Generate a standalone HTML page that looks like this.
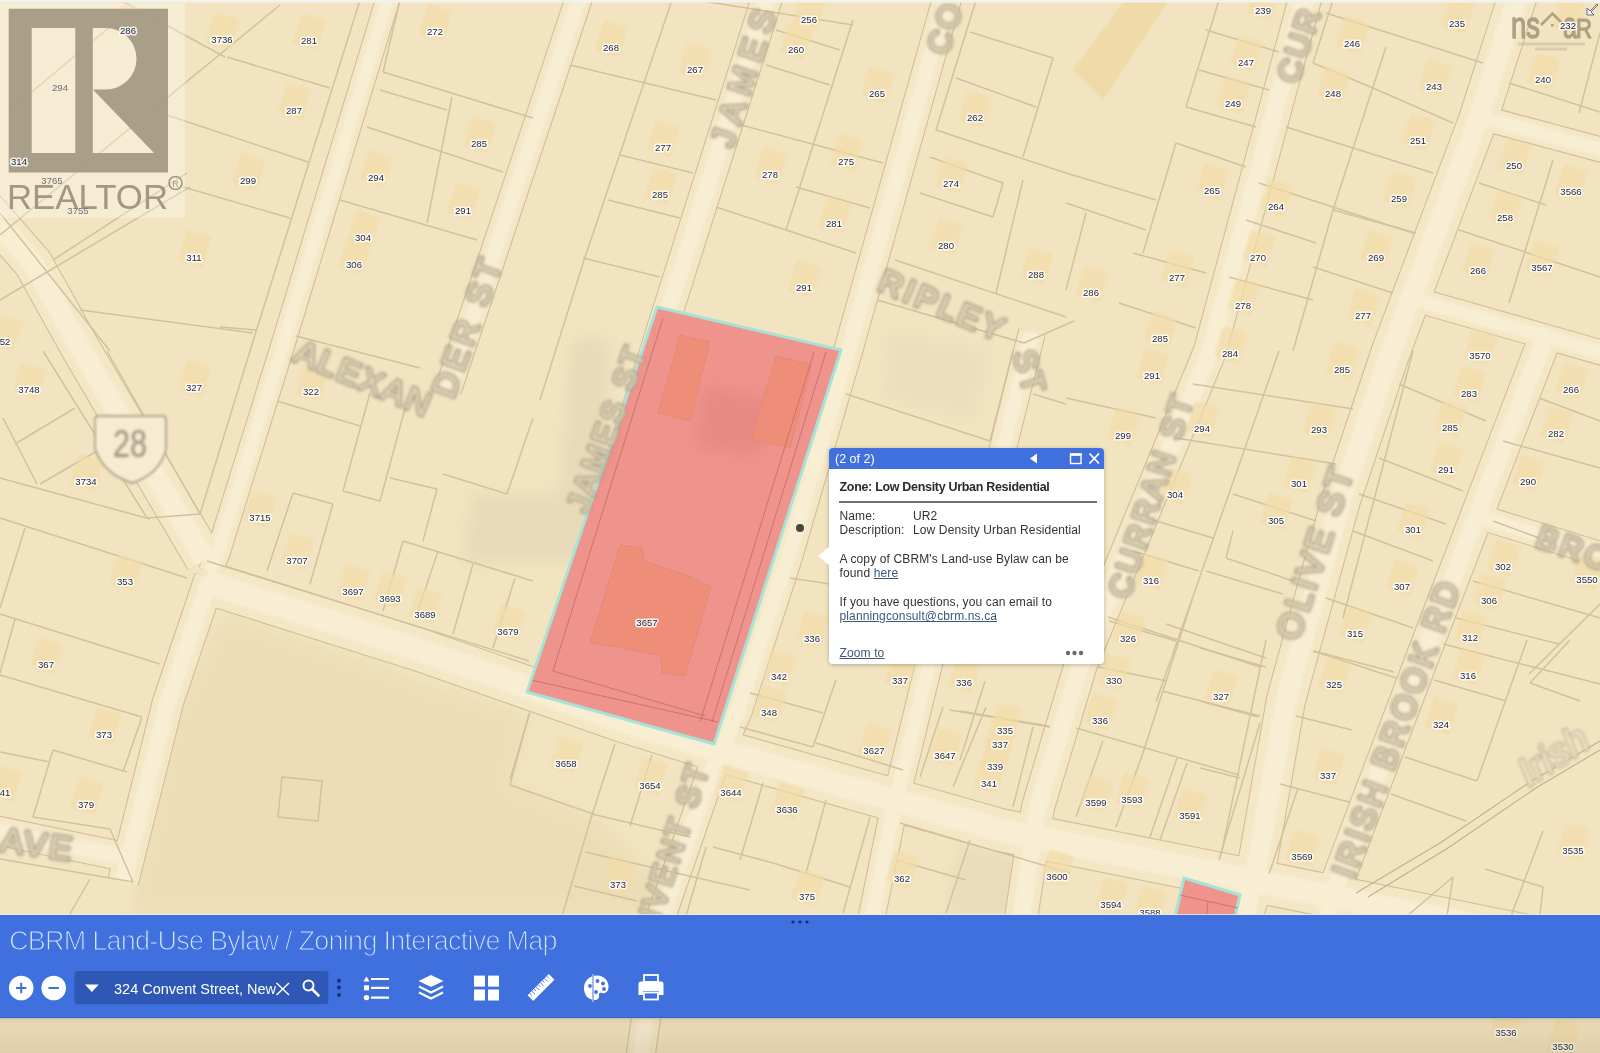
<!DOCTYPE html>
<html><head><meta charset="utf-8"><style>
html,body{margin:0;padding:0;width:1600px;height:1053px;overflow:hidden;background:#F2E4C1;font-family:"Liberation Sans",sans-serif;}
#map{position:absolute;left:0;top:0;width:1600px;height:1053px;}
#map svg{display:block;}
#popup{position:absolute;left:829px;top:448px;width:275px;height:216px;background:#fff;border-radius:4px;box-shadow:0 1px 4px rgba(0,0,0,0.25);color:#333;font-size:12px;}
#popup .ph{position:absolute;left:0;top:0;width:275px;height:21px;background:#3F70DE;border-radius:4px 4px 0 0;}
#popup .pt{position:absolute;left:6px;top:3.6px;color:#fff;font-size:12.5px;line-height:15px;white-space:nowrap;}
#popup .pz{position:absolute;left:10.5px;top:32.3px;font-size:12.5px;font-weight:bold;letter-spacing:-0.31px;line-height:15px;white-space:nowrap;color:#2b2b2b;}
#popup .psep{position:absolute;left:10px;top:53px;width:258px;height:2px;background:#707070;}
#popup .pl{position:absolute;left:10.5px;font-size:12px;letter-spacing:0.13px;line-height:15px;white-space:nowrap;color:#333;}
#popup u.lk{color:#3A5878;text-decoration:underline;}
#bar{position:absolute;left:0;top:915px;width:1600px;height:101.5px;background:#3F70DE;border-bottom:1px solid #3563C8;}
#bar > *{margin-top:1px;}
#topline{position:absolute;left:0;top:913.5px;width:1600px;height:1.5px;background:rgba(235,238,240,0.75);}
#below{position:absolute;left:0;top:1017.5px;width:1600px;height:36px;background:linear-gradient(to bottom, rgba(150,150,150,0.55) 0px, rgba(140,110,60,0.16) 2px, rgba(120,95,50,0.08) 8px, rgba(120,95,50,0.11) 20px, rgba(120,95,50,0.16) 36px);}
#bar .title{position:absolute;left:8px;top:8px;font-size:29px;line-height:34px;color:#D8E6FF;white-space:nowrap;letter-spacing:-0.5px;}
#bar .stext{position:absolute;left:114px;top:63.7px;font-size:14.5px;line-height:18px;color:#fff;white-space:nowrap;}
#bar .bdots{position:absolute;left:791px;top:4px;width:20px;height:4px;}
#bar .bdots i{display:inline-block;width:3px;height:3px;border-radius:50%;background:#1B2E6A;margin-right:3px;}

</style></head><body>
<div id="map"><svg width="1600" height="1053" viewBox="0 0 1600 1053"><defs><filter id="bl1" x="-5%" y="-5%" width="110%" height="110%"><feGaussianBlur stdDeviation="1.2"/></filter><filter id="bl05" x="-5%" y="-5%" width="110%" height="110%"><feGaussianBlur stdDeviation="0.45"/></filter><filter id="bl07" x="-5%" y="-5%" width="110%" height="110%"><feGaussianBlur stdDeviation="0.7"/></filter><filter id="bl15" x="-5%" y="-5%" width="110%" height="110%"><feGaussianBlur stdDeviation="1.6"/></filter><filter id="bl2" x="-20%" y="-20%" width="140%" height="140%"><feGaussianBlur stdDeviation="1.35"/></filter><filter id="bl3" x="-20%" y="-20%" width="140%" height="140%"><feGaussianBlur stdDeviation="8"/></filter></defs><rect width="1600" height="1053" fill="#F2E4C1"/><g filter="url(#bl3)"><polygon points="225,614 529,716 510,785 600,820 690,916 130,916 168,720" fill="#E8D8AC" fill-opacity="0.5"/><polygon points="571,339 610,339 598,558 465,565 470,494 560,494" fill="#DCCFAD" fill-opacity="0.45"/><polygon points="890,330 990,350 975,420 880,400" fill="#DDD0AE" fill-opacity="0.25"/><polygon points="960,845 1030,860 1015,916 945,916" fill="#DDD0AE" fill-opacity="0.4"/></g><polygon points="1073,70 1103,100 1170,-2 1126,-2" fill="#EDD7A2" fill-opacity="0.8" filter="url(#bl1)"/><g filter="url(#bl07)"><polyline points="389,-5 281,351 218,553 210,572" fill="none" stroke="#D0BF98" stroke-width="25.2" stroke-linejoin="round"/><polyline points="210,578 168,702 123,882" fill="none" stroke="#D0BF98" stroke-width="32.2" stroke-linejoin="round"/><polyline points="-10,829 125,857" fill="none" stroke="#D0BF98" stroke-width="30.2" stroke-linejoin="round"/><polyline points="-40,180 33,263 82,351 205,560" fill="none" stroke="#D0BF98" stroke-width="40.2" stroke-linejoin="round"/><polyline points="205,582 420,650 620,720 700,745 1000,830 1300,890 1620,955" fill="none" stroke="#D0BF98" stroke-width="44.2" stroke-linejoin="round"/><polyline points="580,-5 448,390" fill="none" stroke="#D0BF98" stroke-width="28.2" stroke-linejoin="round"/><polyline points="768,-5 665,320 549,692" fill="none" stroke="#D0BF98" stroke-width="32.2" stroke-linejoin="round"/><polyline points="948,-5 848,351 787,560 738,710 712,770 660,920 640,1060" fill="none" stroke="#D0BF98" stroke-width="30.2" stroke-linejoin="round"/><polyline points="1032,332 1003,448 930,660 895,803 870,925" fill="none" stroke="#D0BF98" stroke-width="28.2" stroke-linejoin="round"/><polyline points="1306,-5 1210,351 1081,664 1038,807 1020,925" fill="none" stroke="#D0BF98" stroke-width="34.2" stroke-linejoin="round"/><polyline points="1518,-5 1478,120 1391,351 1341,500 1286,700 1256,871 1240,930" fill="none" stroke="#D0BF98" stroke-width="40.2" stroke-linejoin="round"/><polyline points="1483,118 1610,152" fill="none" stroke="#D0BF98" stroke-width="26.2" stroke-linejoin="round"/><polyline points="1417,300 1610,355" fill="none" stroke="#D0BF98" stroke-width="26.2" stroke-linejoin="round"/><polyline points="1480,517 1610,557" fill="none" stroke="#D0BF98" stroke-width="26.2" stroke-linejoin="round"/><polyline points="1548,330 1540,351 1429,640 1333,893 1325,930" fill="none" stroke="#D0BF98" stroke-width="34.2" stroke-linejoin="round"/><polyline points="389,-5 281,351 218,553 210,572" fill="none" stroke="#F3E7C6" stroke-width="23" stroke-linejoin="round"/><polyline points="210,578 168,702 123,882" fill="none" stroke="#F3E7C6" stroke-width="30" stroke-linejoin="round"/><polyline points="-10,829 125,857" fill="none" stroke="#F3E7C6" stroke-width="28" stroke-linejoin="round"/><polyline points="-40,180 33,263 82,351 205,560" fill="none" stroke="#F3E7C6" stroke-width="38" stroke-linejoin="round"/><polyline points="205,582 420,650 620,720 700,745 1000,830 1300,890 1620,955" fill="none" stroke="#F3E7C6" stroke-width="42" stroke-linejoin="round"/><polyline points="580,-5 448,390" fill="none" stroke="#F3E7C6" stroke-width="26" stroke-linejoin="round"/><polyline points="768,-5 665,320 549,692" fill="none" stroke="#F3E7C6" stroke-width="30" stroke-linejoin="round"/><polyline points="948,-5 848,351 787,560 738,710 712,770 660,920 640,1060" fill="none" stroke="#F3E7C6" stroke-width="28" stroke-linejoin="round"/><polyline points="1032,332 1003,448 930,660 895,803 870,925" fill="none" stroke="#F3E7C6" stroke-width="26" stroke-linejoin="round"/><polyline points="1306,-5 1210,351 1081,664 1038,807 1020,925" fill="none" stroke="#F3E7C6" stroke-width="32" stroke-linejoin="round"/><polyline points="1518,-5 1478,120 1391,351 1341,500 1286,700 1256,871 1240,930" fill="none" stroke="#F3E7C6" stroke-width="38" stroke-linejoin="round"/><polyline points="1483,118 1610,152" fill="none" stroke="#F3E7C6" stroke-width="24" stroke-linejoin="round"/><polyline points="1417,300 1610,355" fill="none" stroke="#F3E7C6" stroke-width="24" stroke-linejoin="round"/><polyline points="1480,517 1610,557" fill="none" stroke="#F3E7C6" stroke-width="24" stroke-linejoin="round"/><polyline points="1548,330 1540,351 1429,640 1333,893 1325,930" fill="none" stroke="#F3E7C6" stroke-width="32" stroke-linejoin="round"/></g><g filter="url(#bl15)"><polyline points="389,-5 281,351 218,553 210,572" fill="none" stroke="#F8EED3" stroke-width="12.7" stroke-linejoin="round"/><polyline points="210,578 168,702 123,882" fill="none" stroke="#F8EED3" stroke-width="16.5" stroke-linejoin="round"/><polyline points="-10,829 125,857" fill="none" stroke="#F8EED3" stroke-width="15.4" stroke-linejoin="round"/><polyline points="-40,180 33,263 82,351 205,560" fill="none" stroke="#F8EED3" stroke-width="20.9" stroke-linejoin="round"/><polyline points="205,582 420,650 620,720 700,745 1000,830 1300,890 1620,955" fill="none" stroke="#F8EED3" stroke-width="23.1" stroke-linejoin="round"/><polyline points="580,-5 448,390" fill="none" stroke="#F8EED3" stroke-width="14.3" stroke-linejoin="round"/><polyline points="768,-5 665,320 549,692" fill="none" stroke="#F8EED3" stroke-width="16.5" stroke-linejoin="round"/><polyline points="948,-5 848,351 787,560 738,710 712,770 660,920 640,1060" fill="none" stroke="#F8EED3" stroke-width="15.4" stroke-linejoin="round"/><polyline points="1032,332 1003,448 930,660 895,803 870,925" fill="none" stroke="#F8EED3" stroke-width="14.3" stroke-linejoin="round"/><polyline points="1306,-5 1210,351 1081,664 1038,807 1020,925" fill="none" stroke="#F8EED3" stroke-width="17.6" stroke-linejoin="round"/><polyline points="1518,-5 1478,120 1391,351 1341,500 1286,700 1256,871 1240,930" fill="none" stroke="#F8EED3" stroke-width="20.9" stroke-linejoin="round"/><polyline points="1483,118 1610,152" fill="none" stroke="#F8EED3" stroke-width="13.2" stroke-linejoin="round"/><polyline points="1417,300 1610,355" fill="none" stroke="#F8EED3" stroke-width="13.2" stroke-linejoin="round"/><polyline points="1480,517 1610,557" fill="none" stroke="#F8EED3" stroke-width="13.2" stroke-linejoin="round"/><polyline points="1548,330 1540,351 1429,640 1333,893 1325,930" fill="none" stroke="#F8EED3" stroke-width="17.6" stroke-linejoin="round"/></g><g stroke="#D2C29C" stroke-width="1.5" fill="none" filter="url(#bl07)"><line x1="167" y1="115" x2="308" y2="162"/><line x1="183" y1="187" x2="290" y2="218"/><line x1="227" y1="57" x2="330" y2="88"/><line x1="280" y1="5" x2="0" y2="235"/><line x1="53" y1="260" x2="187" y2="173"/><line x1="80" y1="310" x2="253" y2="333"/><line x1="10" y1="110" x2="130" y2="10"/><line x1="383" y1="72" x2="533" y2="118"/><line x1="367" y1="127" x2="503" y2="172"/><line x1="452" y1="97" x2="427" y2="223"/><line x1="340" y1="200" x2="477" y2="240"/><line x1="380" y1="90" x2="447" y2="110"/><line x1="400" y1="0" x2="383" y2="72"/><line x1="360" y1="0" x2="250" y2="351"/><line x1="220" y1="327" x2="256" y2="330"/><line x1="296" y1="336" x2="420" y2="368"/><line x1="0" y1="213" x2="110" y2="351"/><line x1="190" y1="187" x2="0" y2="300"/><line x1="225" y1="57" x2="120" y2="0"/><line x1="570" y1="65" x2="716" y2="100"/><line x1="671" y1="3" x2="585" y2="257"/><line x1="620" y1="155" x2="693" y2="173"/><line x1="608" y1="200" x2="680" y2="218"/><line x1="583" y1="258" x2="660" y2="277"/><line x1="776" y1="30" x2="840" y2="50"/><line x1="766" y1="65" x2="830" y2="85"/><line x1="741" y1="125" x2="883" y2="163"/><line x1="716" y1="207" x2="856" y2="253"/><line x1="853" y1="20" x2="786" y2="230"/><line x1="796" y1="187" x2="870" y2="208"/><line x1="970" y1="32" x2="1053" y2="58"/><line x1="956" y1="78" x2="1036" y2="107"/><line x1="936" y1="130" x2="1066" y2="173"/><line x1="920" y1="193" x2="993" y2="217"/><line x1="1003" y1="183" x2="993" y2="217"/><line x1="930" y1="157" x2="1003" y2="183"/><line x1="895" y1="260" x2="1066" y2="317"/><line x1="976" y1="0" x2="936" y2="130"/><line x1="1053" y1="58" x2="1023" y2="157"/><line x1="1023" y1="180" x2="996" y2="293"/><line x1="1024" y1="343" x2="1074" y2="321"/><line x1="877" y1="300" x2="1024" y2="343"/><line x1="585" y1="257" x2="540" y2="400"/><line x1="696" y1="0" x2="853" y2="25"/><line x1="1219" y1="0" x2="1186" y2="107"/><line x1="1186" y1="107" x2="1256" y2="127"/><line x1="1206" y1="30" x2="1279" y2="52"/><line x1="1199" y1="70" x2="1269" y2="90"/><line x1="1176" y1="143" x2="1246" y2="167"/><line x1="1176" y1="143" x2="1143" y2="253"/><line x1="1066" y1="173" x2="1156" y2="200"/><line x1="1066" y1="203" x2="1146" y2="230"/><line x1="1133" y1="253" x2="1206" y2="273"/><line x1="1119" y1="303" x2="1196" y2="328"/><line x1="1086" y1="213" x2="1066" y2="290"/><line x1="1333" y1="0" x2="1313" y2="63"/><line x1="1313" y1="63" x2="1373" y2="88"/><line x1="1326" y1="13" x2="1483" y2="63"/><line x1="1286" y1="127" x2="1433" y2="173"/><line x1="1373" y1="88" x2="1453" y2="123"/><line x1="1259" y1="183" x2="1413" y2="233"/><line x1="1246" y1="220" x2="1316" y2="243"/><line x1="1333" y1="210" x2="1416" y2="233"/><line x1="1386" y1="47" x2="1333" y2="210"/><line x1="1333" y1="210" x2="1293" y2="351"/><line x1="1313" y1="267" x2="1393" y2="293"/><line x1="1229" y1="277" x2="1313" y2="300"/><line x1="1509" y1="83" x2="1600" y2="112"/><line x1="1479" y1="183" x2="1546" y2="205"/><line x1="1459" y1="230" x2="1600" y2="277"/><line x1="1553" y1="160" x2="1509" y2="303"/><line x1="1600" y1="33" x2="1579" y2="113"/><line x1="15" y1="444" x2="75" y2="408"/><line x1="0" y1="478" x2="150" y2="519"/><line x1="40" y1="484" x2="97" y2="451"/><line x1="0" y1="518" x2="187" y2="578"/><line x1="25" y1="528" x2="0" y2="608"/><line x1="0" y1="614" x2="160" y2="664"/><line x1="3" y1="418" x2="37" y2="484"/><line x1="43" y1="351" x2="147" y2="518"/><line x1="107" y1="351" x2="200" y2="514"/><line x1="147" y1="518" x2="200" y2="514"/><line x1="200" y1="514" x2="250" y2="351"/><line x1="277" y1="401" x2="360" y2="426"/><line x1="370" y1="393" x2="343" y2="491"/><line x1="343" y1="491" x2="380" y2="501"/><line x1="407" y1="401" x2="380" y2="501"/><line x1="390" y1="478" x2="437" y2="489"/><line x1="437" y1="489" x2="423" y2="541"/><line x1="443" y1="474" x2="507" y2="494"/><line x1="533" y1="418" x2="507" y2="494"/><line x1="293" y1="493" x2="333" y2="504"/><line x1="293" y1="493" x2="267" y2="571"/><line x1="333" y1="504" x2="310" y2="584"/><line x1="403" y1="541" x2="533" y2="581"/><line x1="403" y1="541" x2="383" y2="611"/><line x1="438" y1="551" x2="417" y2="614"/><line x1="473" y1="564" x2="453" y2="634"/><line x1="515" y1="578" x2="493" y2="648"/><line x1="207" y1="561" x2="529" y2="661"/><line x1="846" y1="394" x2="990" y2="441"/><line x1="990" y1="441" x2="1013" y2="351"/><line x1="790" y1="578" x2="830" y2="584"/><line x1="1033" y1="394" x2="1066" y2="404"/><line x1="1066" y1="398" x2="1156" y2="418"/><line x1="1146" y1="518" x2="1213" y2="538"/><line x1="1133" y1="551" x2="1199" y2="571"/><line x1="1109" y1="621" x2="1176" y2="641"/><line x1="1279" y1="351" x2="1156" y2="702"/><line x1="1193" y1="384" x2="1353" y2="409"/><line x1="1176" y1="438" x2="1336" y2="464"/><line x1="1233" y1="494" x2="1316" y2="521"/><line x1="1233" y1="531" x2="1226" y2="558"/><line x1="1226" y1="558" x2="1293" y2="581"/><line x1="1206" y1="571" x2="1283" y2="594"/><line x1="1166" y1="624" x2="1266" y2="658"/><line x1="1413" y1="351" x2="1343" y2="618"/><line x1="1399" y1="384" x2="1486" y2="421"/><line x1="1379" y1="458" x2="1463" y2="491"/><line x1="1359" y1="494" x2="1446" y2="524"/><line x1="1353" y1="531" x2="1433" y2="561"/><line x1="1326" y1="598" x2="1413" y2="628"/><line x1="1313" y1="651" x2="1396" y2="678"/><line x1="1539" y1="398" x2="1600" y2="421"/><line x1="1503" y1="441" x2="1600" y2="468"/><line x1="1493" y1="521" x2="1539" y2="538"/><line x1="1473" y1="581" x2="1600" y2="618"/><line x1="1456" y1="618" x2="1559" y2="644"/><line x1="1529" y1="674" x2="1600" y2="604"/><line x1="1443" y1="644" x2="1600" y2="684"/><line x1="0" y1="752" x2="50" y2="762"/><line x1="53" y1="750" x2="127" y2="772"/><line x1="53" y1="750" x2="33" y2="817"/><line x1="33" y1="817" x2="110" y2="829"/><line x1="110" y1="829" x2="133" y2="882"/><line x1="0" y1="859" x2="133" y2="882"/><line x1="0" y1="675" x2="142" y2="717"/><line x1="142" y1="717" x2="123" y2="772"/><line x1="15" y1="619" x2="0" y2="673"/><line x1="90" y1="879" x2="67" y2="919"/><line x1="530" y1="712" x2="510" y2="779"/><line x1="1108" y1="617" x2="1260" y2="667"/><line x1="1192" y1="600" x2="1143" y2="753"/><line x1="1143" y1="753" x2="1116" y2="827"/><line x1="1098" y1="667" x2="1167" y2="681"/><line x1="1162" y1="691" x2="1260" y2="716"/><line x1="1076" y1="728" x2="1239" y2="775"/><line x1="1103" y1="741" x2="1076" y2="817"/><line x1="1177" y1="758" x2="1150" y2="837"/><line x1="1187" y1="763" x2="1160" y2="840"/><line x1="1260" y1="723" x2="1219" y2="860"/><line x1="960" y1="711" x2="1049" y2="726"/><line x1="985" y1="681" x2="960" y2="760"/><line x1="1200" y1="648" x2="1266" y2="667"/><line x1="1266" y1="640" x2="1221" y2="855"/><line x1="1314" y1="651" x2="1394" y2="672"/><line x1="1296" y1="716" x2="1352" y2="730"/><line x1="1280" y1="784" x2="1349" y2="802"/><line x1="1298" y1="788" x2="1269" y2="874"/><line x1="1200" y1="701" x2="1258" y2="717"/><line x1="1200" y1="768" x2="1240" y2="778"/><line x1="1434" y1="680" x2="1506" y2="701"/><line x1="1527" y1="640" x2="1477" y2="781"/><line x1="1405" y1="757" x2="1477" y2="781"/><line x1="1391" y1="794" x2="1466" y2="821"/><line x1="1530" y1="683" x2="1580" y2="701"/><line x1="1570" y1="640" x2="1530" y2="683"/><line x1="1543" y1="831" x2="1511" y2="916"/><line x1="1485" y1="869" x2="1543" y2="887"/><line x1="1543" y1="887" x2="1540" y2="916"/><line x1="1453" y1="877" x2="1407" y2="916"/><line x1="1453" y1="877" x2="1447" y2="916"/><line x1="529" y1="714" x2="510" y2="785"/><line x1="510" y1="785" x2="596" y2="815"/><line x1="615" y1="744" x2="592" y2="815"/><line x1="592" y1="815" x2="562" y2="916"/><line x1="652" y1="755" x2="630" y2="826"/><line x1="596" y1="815" x2="690" y2="837"/><line x1="585" y1="852" x2="750" y2="890"/><line x1="574" y1="886" x2="637" y2="901"/><line x1="706" y1="847" x2="686" y2="916"/><line x1="763" y1="783" x2="740" y2="860"/><line x1="713" y1="847" x2="773" y2="863"/><line x1="773" y1="863" x2="850" y2="887"/><line x1="826" y1="800" x2="806" y2="873"/><line x1="870" y1="817" x2="843" y2="913"/><line x1="900" y1="823" x2="1070" y2="873"/><line x1="970" y1="840" x2="946" y2="913"/><line x1="896" y1="860" x2="966" y2="880"/><line x1="750" y1="693" x2="823" y2="713"/><line x1="740" y1="727" x2="813" y2="747"/><line x1="813" y1="747" x2="836" y2="680"/><line x1="816" y1="743" x2="903" y2="770"/><line x1="950" y1="710" x2="1050" y2="727"/><line x1="943" y1="707" x2="920" y2="777"/><line x1="986" y1="707" x2="953" y2="787"/><line x1="1033" y1="727" x2="1013" y2="807"/><polygon points="282,777 322,781 318,821 278,817"/></g><g fill="none" stroke="#C2B08A" stroke-width="1.1" filter="url(#bl05)"><polyline points="1356,893 1440,843 1530,782 1600,741"/><polyline points="1368,897 1448,848 1536,788 1600,750"/></g><g fill="#F2DCA6" fill-opacity="0.7" filter="url(#bl1)"><rect x="-12" y="-16" width="25" height="31" transform="translate(128,22) rotate(17)"/><rect x="-12" y="-16" width="25" height="31" transform="translate(222,31) rotate(17)"/><rect x="-12" y="-16" width="25" height="31" transform="translate(309,32) rotate(17)"/><rect x="-12" y="-16" width="25" height="31" transform="translate(435,23) rotate(17)"/><rect x="-12" y="-16" width="25" height="31" transform="translate(611,39) rotate(17)"/><rect x="-12" y="-16" width="25" height="31" transform="translate(809,11) rotate(17)"/><rect x="-12" y="-16" width="25" height="31" transform="translate(796,41) rotate(17)"/><rect x="-12" y="-16" width="25" height="31" transform="translate(695,61) rotate(17)"/><rect x="-12" y="-16" width="25" height="31" transform="translate(1263,2) rotate(17)"/><rect x="-12" y="-16" width="25" height="31" transform="translate(1457,15) rotate(17)"/><rect x="-12" y="-16" width="25" height="31" transform="translate(1568,17) rotate(17)"/><rect x="-12" y="-16" width="25" height="31" transform="translate(1352,35) rotate(17)"/><rect x="-12" y="-16" width="25" height="31" transform="translate(1246,54) rotate(17)"/><rect x="-12" y="-16" width="25" height="31" transform="translate(1543,71) rotate(17)"/><rect x="-12" y="-16" width="25" height="31" transform="translate(1434,78) rotate(17)"/><rect x="-12" y="-16" width="25" height="31" transform="translate(1333,85) rotate(17)"/><rect x="-12" y="-16" width="25" height="31" transform="translate(1233,95) rotate(17)"/><rect x="-12" y="-16" width="25" height="31" transform="translate(877,85) rotate(17)"/><rect x="-12" y="-16" width="25" height="31" transform="translate(975,109) rotate(17)"/><rect x="-12" y="-16" width="25" height="31" transform="translate(294,102) rotate(17)"/><rect x="-12" y="-16" width="25" height="31" transform="translate(479,135) rotate(17)"/><rect x="-12" y="-16" width="25" height="31" transform="translate(663,139) rotate(17)"/><rect x="-12" y="-16" width="25" height="31" transform="translate(1418,132) rotate(17)"/><rect x="-12" y="-16" width="25" height="31" transform="translate(846,153) rotate(17)"/><rect x="-12" y="-16" width="25" height="31" transform="translate(770,166) rotate(17)"/><rect x="-12" y="-16" width="25" height="31" transform="translate(248,172) rotate(17)"/><rect x="-12" y="-16" width="25" height="31" transform="translate(376,169) rotate(17)"/><rect x="-12" y="-16" width="25" height="31" transform="translate(951,175) rotate(17)"/><rect x="-12" y="-16" width="25" height="31" transform="translate(1514,157) rotate(17)"/><rect x="-12" y="-16" width="25" height="31" transform="translate(1212,182) rotate(17)"/><rect x="-12" y="-16" width="25" height="31" transform="translate(1571,183) rotate(17)"/><rect x="-12" y="-16" width="25" height="31" transform="translate(660,186) rotate(17)"/><rect x="-12" y="-16" width="25" height="31" transform="translate(463,202) rotate(17)"/><rect x="-12" y="-16" width="25" height="31" transform="translate(1399,190) rotate(17)"/><rect x="-12" y="-16" width="25" height="31" transform="translate(1276,198) rotate(17)"/><rect x="-12" y="-16" width="25" height="31" transform="translate(834,215) rotate(17)"/><rect x="-12" y="-16" width="25" height="31" transform="translate(1505,209) rotate(17)"/><rect x="-12" y="-16" width="25" height="31" transform="translate(363,229) rotate(17)"/><rect x="-12" y="-16" width="25" height="31" transform="translate(946,237) rotate(17)"/><rect x="-12" y="-16" width="25" height="31" transform="translate(194,249) rotate(17)"/><rect x="-12" y="-16" width="25" height="31" transform="translate(1258,249) rotate(17)"/><rect x="-12" y="-16" width="25" height="31" transform="translate(1376,249) rotate(17)"/><rect x="-12" y="-16" width="25" height="31" transform="translate(354,256) rotate(17)"/><rect x="-12" y="-16" width="25" height="31" transform="translate(1478,262) rotate(17)"/><rect x="-12" y="-16" width="25" height="31" transform="translate(1036,266) rotate(17)"/><rect x="-12" y="-16" width="25" height="31" transform="translate(1542,259) rotate(17)"/><rect x="-12" y="-16" width="25" height="31" transform="translate(1177,269) rotate(17)"/><rect x="-12" y="-16" width="25" height="31" transform="translate(804,279) rotate(17)"/><rect x="-12" y="-16" width="25" height="31" transform="translate(1091,284) rotate(17)"/><rect x="-12" y="-16" width="25" height="31" transform="translate(1243,297) rotate(17)"/><rect x="-12" y="-16" width="25" height="31" transform="translate(1363,307) rotate(17)"/><rect x="-12" y="-16" width="25" height="31" transform="translate(1160,330) rotate(17)"/><rect x="-12" y="-16" width="25" height="31" transform="translate(1480,347) rotate(17)"/><rect x="-12" y="-16" width="25" height="31" transform="translate(5,333) rotate(17)"/><rect x="-12" y="-16" width="25" height="31" transform="translate(1230,345) rotate(17)"/><rect x="-12" y="-16" width="25" height="31" transform="translate(1152,367) rotate(17)"/><rect x="-12" y="-16" width="25" height="31" transform="translate(1342,361) rotate(17)"/><rect x="-12" y="-16" width="25" height="31" transform="translate(29,381) rotate(17)"/><rect x="-12" y="-16" width="25" height="31" transform="translate(194,379) rotate(17)"/><rect x="-12" y="-16" width="25" height="31" transform="translate(311,383) rotate(17)"/><rect x="-12" y="-16" width="25" height="31" transform="translate(1571,381) rotate(17)"/><rect x="-12" y="-16" width="25" height="31" transform="translate(1469,385) rotate(17)"/><rect x="-12" y="-16" width="25" height="31" transform="translate(1450,419) rotate(17)"/><rect x="-12" y="-16" width="25" height="31" transform="translate(1123,427) rotate(17)"/><rect x="-12" y="-16" width="25" height="31" transform="translate(1202,420) rotate(17)"/><rect x="-12" y="-16" width="25" height="31" transform="translate(1319,421) rotate(17)"/><rect x="-12" y="-16" width="25" height="31" transform="translate(1556,425) rotate(17)"/><rect x="-12" y="-16" width="25" height="31" transform="translate(1446,461) rotate(17)"/><rect x="-12" y="-16" width="25" height="31" transform="translate(1528,473) rotate(17)"/><rect x="-12" y="-16" width="25" height="31" transform="translate(86,473) rotate(17)"/><rect x="-12" y="-16" width="25" height="31" transform="translate(1299,475) rotate(17)"/><rect x="-12" y="-16" width="25" height="31" transform="translate(1175,486) rotate(17)"/><rect x="-12" y="-16" width="25" height="31" transform="translate(260,509) rotate(17)"/><rect x="-12" y="-16" width="25" height="31" transform="translate(1276,512) rotate(17)"/><rect x="-12" y="-16" width="25" height="31" transform="translate(1413,521) rotate(17)"/><rect x="-12" y="-16" width="25" height="31" transform="translate(297,552) rotate(17)"/><rect x="-12" y="-16" width="25" height="31" transform="translate(1503,558) rotate(17)"/><rect x="-12" y="-16" width="25" height="31" transform="translate(1587,571) rotate(17)"/><rect x="-12" y="-16" width="25" height="31" transform="translate(125,573) rotate(17)"/><rect x="-12" y="-16" width="25" height="31" transform="translate(1151,572) rotate(17)"/><rect x="-12" y="-16" width="25" height="31" transform="translate(1402,578) rotate(17)"/><rect x="-12" y="-16" width="25" height="31" transform="translate(353,583) rotate(17)"/><rect x="-12" y="-16" width="25" height="31" transform="translate(390,590) rotate(17)"/><rect x="-12" y="-16" width="25" height="31" transform="translate(1489,592) rotate(17)"/><rect x="-12" y="-16" width="25" height="31" transform="translate(425,606) rotate(17)"/><rect x="-12" y="-16" width="25" height="31" transform="translate(647,614) rotate(17)"/><rect x="-12" y="-16" width="25" height="31" transform="translate(508,623) rotate(17)"/><rect x="-12" y="-16" width="25" height="31" transform="translate(1355,625) rotate(17)"/><rect x="-12" y="-16" width="25" height="31" transform="translate(1470,629) rotate(17)"/><rect x="-12" y="-16" width="25" height="31" transform="translate(1128,630) rotate(17)"/><rect x="-12" y="-16" width="25" height="31" transform="translate(812,630) rotate(17)"/><rect x="-12" y="-16" width="25" height="31" transform="translate(46,656) rotate(17)"/><rect x="-12" y="-16" width="25" height="31" transform="translate(1468,667) rotate(17)"/><rect x="-12" y="-16" width="25" height="31" transform="translate(779,668) rotate(17)"/><rect x="-12" y="-16" width="25" height="31" transform="translate(900,672) rotate(17)"/><rect x="-12" y="-16" width="25" height="31" transform="translate(964,674) rotate(17)"/><rect x="-12" y="-16" width="25" height="31" transform="translate(1114,672) rotate(17)"/><rect x="-12" y="-16" width="25" height="31" transform="translate(1334,676) rotate(17)"/><rect x="-12" y="-16" width="25" height="31" transform="translate(1221,688) rotate(17)"/><rect x="-12" y="-16" width="25" height="31" transform="translate(769,704) rotate(17)"/><rect x="-12" y="-16" width="25" height="31" transform="translate(1100,712) rotate(17)"/><rect x="-12" y="-16" width="25" height="31" transform="translate(1441,716) rotate(17)"/><rect x="-12" y="-16" width="25" height="31" transform="translate(104,726) rotate(17)"/><rect x="-12" y="-16" width="25" height="31" transform="translate(1005,722) rotate(17)"/><rect x="-12" y="-16" width="25" height="31" transform="translate(1000,736) rotate(17)"/><rect x="-12" y="-16" width="25" height="31" transform="translate(874,742) rotate(17)"/><rect x="-12" y="-16" width="25" height="31" transform="translate(945,747) rotate(17)"/><rect x="-12" y="-16" width="25" height="31" transform="translate(995,758) rotate(17)"/><rect x="-12" y="-16" width="25" height="31" transform="translate(566,755) rotate(17)"/><rect x="-12" y="-16" width="25" height="31" transform="translate(989,775) rotate(17)"/><rect x="-12" y="-16" width="25" height="31" transform="translate(1328,767) rotate(17)"/><rect x="-12" y="-16" width="25" height="31" transform="translate(650,777) rotate(17)"/><rect x="-12" y="-16" width="25" height="31" transform="translate(731,784) rotate(17)"/><rect x="-12" y="-16" width="25" height="31" transform="translate(5,784) rotate(17)"/><rect x="-12" y="-16" width="25" height="31" transform="translate(86,796) rotate(17)"/><rect x="-12" y="-16" width="25" height="31" transform="translate(787,801) rotate(17)"/><rect x="-12" y="-16" width="25" height="31" transform="translate(1096,794) rotate(17)"/><rect x="-12" y="-16" width="25" height="31" transform="translate(1132,791) rotate(17)"/><rect x="-12" y="-16" width="25" height="31" transform="translate(1190,807) rotate(17)"/><rect x="-12" y="-16" width="25" height="31" transform="translate(1573,842) rotate(17)"/><rect x="-12" y="-16" width="25" height="31" transform="translate(1302,848) rotate(17)"/><rect x="-12" y="-16" width="25" height="31" transform="translate(902,870) rotate(17)"/><rect x="-12" y="-16" width="25" height="31" transform="translate(1057,868) rotate(17)"/><rect x="-12" y="-16" width="25" height="31" transform="translate(807,888) rotate(17)"/><rect x="-12" y="-16" width="25" height="31" transform="translate(618,876) rotate(17)"/><rect x="-12" y="-16" width="25" height="31" transform="translate(1111,896) rotate(17)"/><rect x="-12" y="-16" width="25" height="31" transform="translate(1150,904) rotate(17)"/><rect x="-12" y="-16" width="25" height="31" transform="translate(1506,1024) rotate(17)"/><rect x="-12" y="-16" width="25" height="31" transform="translate(1563,1038) rotate(17)"/></g><polygon points="657,307 841,350 714,744 527,692" fill="#EF938D"/><g filter="url(#bl3)"><polygon points="705,385 775,400 760,455 695,448" fill="#E2847F" fill-opacity="0.6"/></g><g fill="#EE8E78" stroke="#D9806E" stroke-width="0.8" stroke-opacity="0.6"><polygon points="680,335 710,342 690,421 658,413"/><polygon points="776,356 812,365 790,448 751,439"/><polygon points="620,545 642,548 644,561 691,577 711,587 685,676 662,673 661,656 612,646 590,643"/></g><g fill="none" stroke="#B5605A" stroke-width="0.9" stroke-opacity="0.7"><polyline points="663,318 553,671 705,716"/><line x1="826" y1="352" x2="712" y2="722"/><line x1="814" y1="352" x2="700" y2="722"/><line x1="531" y1="680" x2="718" y2="722"/></g><polygon points="657,307 841,350 714,744 527,692" fill="none" stroke="#A6E3D7" stroke-width="3" stroke-linejoin="round"/><polygon points="1184,878 1240,895 1232,930 1172,930" fill="#EF938D" stroke="#A6E3D7" stroke-width="3"/><path d="M1180 895 L1238 908 M1208 902 L1206 920" stroke="#B5605A" stroke-width="0.9" stroke-opacity="0.7"/><g filter="url(#bl2)" font-family="Liberation Sans, sans-serif" text-anchor="middle" fill="#E6DABC" stroke="#A2967E" stroke-width="3.4" stroke-linejoin="round" paint-order="stroke"><text x="0" y="11.9" font-size="33" letter-spacing="8" transform="translate(744,74) rotate(-72)">JAMES</text><text x="0" y="11.2" font-size="31" letter-spacing="3" transform="translate(607,428) rotate(-70)">JAMES ST</text><text x="0" y="12.2" font-size="34" letter-spacing="2" transform="translate(364,378) rotate(23)">ALEXAN</text><text x="0" y="12.2" font-size="34" letter-spacing="4" transform="translate(467,326) rotate(-70)">DER ST</text><text x="0" y="11.5" font-size="32" letter-spacing="3" transform="translate(944,27) rotate(-72)">CO</text><text x="0" y="11.9" font-size="33" letter-spacing="3" transform="translate(943,305) rotate(23)">RIPLEY</text><text x="0" y="11.5" font-size="32" letter-spacing="2" transform="translate(1030,372) rotate(74)">ST</text><text x="0" y="11.5" font-size="32" letter-spacing="3" transform="translate(1150,495) rotate(-72)">CURRAN ST</text><text x="0" y="11.5" font-size="32" letter-spacing="3" transform="translate(1298,44) rotate(-72)">CUR</text><text x="0" y="12.6" font-size="35" letter-spacing="3" transform="translate(1314,552) rotate(-72)">OLIVE ST</text><text x="0" y="11.9" font-size="33" letter-spacing="3" transform="translate(1396,728) rotate(-70)">IRISH BROOK RD</text><text x="0" y="11.5" font-size="32" letter-spacing="3" transform="translate(1575,548) rotate(20)">BRO</text><text x="0" y="12.2" font-size="34" letter-spacing="3" transform="translate(38,844) rotate(8)">AVE</text><text x="0" y="11.2" font-size="31" letter-spacing="3" transform="translate(664,872) rotate(-72)">CONVENT ST</text></g><g filter="url(#bl2)"><text x="0" y="8" font-family="Liberation Sans, sans-serif" font-style="italic" font-size="40" text-anchor="middle" fill="#F0E5C8" stroke="#B3A68B" stroke-width="2.6" paint-order="stroke" transform="translate(1556,760) rotate(-33)">Irish</text></g><g filter="url(#bl1)"><path d="M95 420 Q95 416 99 416 H162 Q166 416 166 420 V449 Q160 474 132 483 Q104 474 95 449 Z" fill="#F6ECD2" stroke="#BDB197" stroke-width="2.4"/></g><g filter="url(#bl15)"><text x="130" y="457" font-family="Liberation Sans, sans-serif" font-size="38" text-anchor="middle" fill="#9A8F79" textLength="34" lengthAdjust="spacingAndGlyphs">28</text></g><rect x="0" y="3" width="185" height="215" fill="#FFFFFF" fill-opacity="0.3"/><path fill-rule="evenodd" fill="#A29781" fill-opacity="0.92" d="M8.7 8.7 H168 V172.5 H8.7 Z M31.7 28 H75.3 V153 H31.7 Z M92.8 28 H105.75 A30.75 30.75 0 0 1 105.75 89.5 H92.8 Z M92.8 89.5 L154 153 H92.8 Z"/><text x="7" y="209" font-family="Liberation Sans, sans-serif" font-size="35.5" fill="#A29781" textLength="161" lengthAdjust="spacingAndGlyphs">REALTOR</text><circle cx="175.5" cy="183" r="6.5" fill="none" stroke="#A29781" stroke-width="1.6"/><text x="175.5" y="186.5" font-family="Liberation Sans, sans-serif" font-size="9" text-anchor="middle" fill="#A29781">R</text><g fill="#ADA085" font-family="Liberation Sans, sans-serif"><text x="1511" y="37.5" font-size="37" textLength="29" lengthAdjust="spacingAndGlyphs" stroke="#ADA085" stroke-width="1.4">ns</text><text x="1563" y="37.5" font-size="37" textLength="14" lengthAdjust="spacingAndGlyphs" stroke="#ADA085" stroke-width="1.4">a</text><text x="1576" y="37.5" font-size="27" textLength="16" lengthAdjust="spacingAndGlyphs" stroke="#ADA085" stroke-width="1.2">R</text><path d="M1541 25 L1552.5 13.5 L1564 25" fill="none" stroke="#ADA085" stroke-width="2.6"/><rect x="1551" y="24" width="2.5" height="2.5"/><rect x="1518" y="42.5" width="67" height="3" fill-opacity="0.35"/><rect x="1535" y="47.5" width="32" height="3" fill-opacity="0.35"/></g><g><path d="M1598 5 L1591 12 L1594 15 L1587 15 L1587 8 L1590 11 L1597 4 Z" fill="#F4F2FA" stroke="#6F6E78" stroke-width="1"/></g><g font-family="Liberation Sans, sans-serif" font-size="9.6" text-anchor="middle" fill="#FFFFFF" stroke="#FFFFFF" stroke-width="3.2" stroke-linejoin="round" filter="url(#bl07)" opacity="0.85"><text x="128" y="33.5">286</text><text x="222" y="42.5">3736</text><text x="309" y="43.5">281</text><text x="435" y="34.5">272</text><text x="611" y="50.5">268</text><text x="809" y="22.5">256</text><text x="796" y="52.5">260</text><text x="695" y="72.5">267</text><text x="1263" y="13.5">239</text><text x="1457" y="26.5">235</text><text x="1568" y="28.5">232</text><text x="1352" y="46.5">246</text><text x="1246" y="65.5">247</text><text x="1543" y="82.5">240</text><text x="1434" y="89.5">243</text><text x="1333" y="96.5">248</text><text x="1233" y="106.5">249</text><text x="877" y="96.5">265</text><text x="975" y="120.5">262</text><text x="294" y="113.5">287</text><text x="479" y="146.5">285</text><text x="663" y="150.5">277</text><text x="1418" y="143.5">251</text><text x="19" y="164.5">314</text><text x="846" y="164.5">275</text><text x="770" y="177.5">278</text><text x="248" y="183.5">299</text><text x="376" y="180.5">294</text><text x="951" y="186.5">274</text><text x="1514" y="168.5">250</text><text x="1212" y="193.5">265</text><text x="1571" y="194.5">3566</text><text x="660" y="197.5">285</text><text x="463" y="213.5">291</text><text x="1399" y="201.5">259</text><text x="1276" y="209.5">264</text><text x="834" y="226.5">281</text><text x="1505" y="220.5">258</text><text x="363" y="240.5">304</text><text x="946" y="248.5">280</text><text x="194" y="260.5">311</text><text x="1258" y="260.5">270</text><text x="1376" y="260.5">269</text><text x="354" y="267.5">306</text><text x="1478" y="273.5">266</text><text x="1036" y="277.5">288</text><text x="1542" y="270.5">3567</text><text x="1177" y="280.5">277</text><text x="804" y="290.5">291</text><text x="1091" y="295.5">286</text><text x="1243" y="308.5">278</text><text x="1363" y="318.5">277</text><text x="1160" y="341.5">285</text><text x="1480" y="358.5">3570</text><text x="5" y="344.5">52</text><text x="1230" y="356.5">284</text><text x="1152" y="378.5">291</text><text x="1342" y="372.5">285</text><text x="29" y="392.5">3748</text><text x="194" y="390.5">327</text><text x="311" y="394.5">322</text><text x="1571" y="392.5">266</text><text x="1469" y="396.5">283</text><text x="1450" y="430.5">285</text><text x="1123" y="438.5">299</text><text x="1202" y="431.5">294</text><text x="1319" y="432.5">293</text><text x="1556" y="436.5">282</text><text x="1446" y="472.5">291</text><text x="1528" y="484.5">290</text><text x="86" y="484.5">3734</text><text x="1299" y="486.5">301</text><text x="1175" y="497.5">304</text><text x="260" y="520.5">3715</text><text x="1276" y="523.5">305</text><text x="1413" y="532.5">301</text><text x="297" y="563.5">3707</text><text x="1503" y="569.5">302</text><text x="1587" y="582.5">3550</text><text x="125" y="584.5">353</text><text x="1151" y="583.5">316</text><text x="1402" y="589.5">307</text><text x="353" y="594.5">3697</text><text x="390" y="601.5">3693</text><text x="1489" y="603.5">306</text><text x="425" y="617.5">3689</text><text x="647" y="625.5">3657</text><text x="508" y="634.5">3679</text><text x="1355" y="636.5">315</text><text x="1470" y="640.5">312</text><text x="1128" y="641.5">326</text><text x="812" y="641.5">336</text><text x="46" y="667.5">367</text><text x="1468" y="678.5">316</text><text x="779" y="679.5">342</text><text x="900" y="683.5">337</text><text x="964" y="685.5">336</text><text x="1114" y="683.5">330</text><text x="1334" y="687.5">325</text><text x="1221" y="699.5">327</text><text x="769" y="715.5">348</text><text x="1100" y="723.5">336</text><text x="1441" y="727.5">324</text><text x="104" y="737.5">373</text><text x="1005" y="733.5">335</text><text x="1000" y="747.5">337</text><text x="874" y="753.5">3627</text><text x="945" y="758.5">3647</text><text x="995" y="769.5">339</text><text x="566" y="766.5">3658</text><text x="989" y="786.5">341</text><text x="1328" y="778.5">337</text><text x="650" y="788.5">3654</text><text x="731" y="795.5">3644</text><text x="5" y="795.5">41</text><text x="86" y="807.5">379</text><text x="787" y="812.5">3636</text><text x="1096" y="805.5">3599</text><text x="1132" y="802.5">3593</text><text x="1190" y="818.5">3591</text><text x="1573" y="853.5">3535</text><text x="1302" y="859.5">3569</text><text x="902" y="881.5">362</text><text x="1057" y="879.5">3600</text><text x="807" y="899.5">375</text><text x="618" y="887.5">373</text><text x="1111" y="907.5">3594</text><text x="1150" y="915.5">3588</text><text x="1506" y="1035.5">3536</text><text x="1563" y="1049.5">3530</text></g><g font-family="Liberation Sans, sans-serif" font-size="9.6" text-anchor="middle" fill="#262836"><text x="128" y="33.5">286</text><text x="222" y="42.5">3736</text><text x="309" y="43.5">281</text><text x="435" y="34.5">272</text><text x="611" y="50.5">268</text><text x="809" y="22.5">256</text><text x="796" y="52.5">260</text><text x="695" y="72.5">267</text><text x="1263" y="13.5">239</text><text x="1457" y="26.5">235</text><text x="1568" y="28.5">232</text><text x="1352" y="46.5">246</text><text x="1246" y="65.5">247</text><text x="1543" y="82.5">240</text><text x="1434" y="89.5">243</text><text x="1333" y="96.5">248</text><text x="1233" y="106.5">249</text><text x="877" y="96.5">265</text><text x="975" y="120.5">262</text><text x="60" y="90.5" fill="#6E6E7C">294</text><text x="294" y="113.5">287</text><text x="479" y="146.5">285</text><text x="663" y="150.5">277</text><text x="1418" y="143.5">251</text><text x="19" y="164.5">314</text><text x="846" y="164.5">275</text><text x="770" y="177.5">278</text><text x="248" y="183.5">299</text><text x="376" y="180.5">294</text><text x="951" y="186.5">274</text><text x="1514" y="168.5">250</text><text x="1212" y="193.5">265</text><text x="1571" y="194.5">3566</text><text x="660" y="197.5">285</text><text x="52" y="183.5" fill="#6E6E7C">3765</text><text x="78" y="213.5" fill="#6E6E7C">3755</text><text x="463" y="213.5">291</text><text x="1399" y="201.5">259</text><text x="1276" y="209.5">264</text><text x="834" y="226.5">281</text><text x="1505" y="220.5">258</text><text x="363" y="240.5">304</text><text x="946" y="248.5">280</text><text x="194" y="260.5">311</text><text x="1258" y="260.5">270</text><text x="1376" y="260.5">269</text><text x="354" y="267.5">306</text><text x="1478" y="273.5">266</text><text x="1036" y="277.5">288</text><text x="1542" y="270.5">3567</text><text x="1177" y="280.5">277</text><text x="804" y="290.5">291</text><text x="1091" y="295.5">286</text><text x="1243" y="308.5">278</text><text x="1363" y="318.5">277</text><text x="1160" y="341.5">285</text><text x="1480" y="358.5">3570</text><text x="5" y="344.5">52</text><text x="1230" y="356.5">284</text><text x="1152" y="378.5">291</text><text x="1342" y="372.5">285</text><text x="29" y="392.5">3748</text><text x="194" y="390.5">327</text><text x="311" y="394.5">322</text><text x="1571" y="392.5">266</text><text x="1469" y="396.5">283</text><text x="1450" y="430.5">285</text><text x="1123" y="438.5">299</text><text x="1202" y="431.5">294</text><text x="1319" y="432.5">293</text><text x="1556" y="436.5">282</text><text x="1446" y="472.5">291</text><text x="1528" y="484.5">290</text><text x="86" y="484.5">3734</text><text x="1299" y="486.5">301</text><text x="1175" y="497.5">304</text><text x="260" y="520.5">3715</text><text x="1276" y="523.5">305</text><text x="1413" y="532.5">301</text><text x="297" y="563.5">3707</text><text x="1503" y="569.5">302</text><text x="1587" y="582.5">3550</text><text x="125" y="584.5">353</text><text x="1151" y="583.5">316</text><text x="1402" y="589.5">307</text><text x="353" y="594.5">3697</text><text x="390" y="601.5">3693</text><text x="1489" y="603.5">306</text><text x="425" y="617.5">3689</text><text x="647" y="625.5">3657</text><text x="508" y="634.5">3679</text><text x="1355" y="636.5">315</text><text x="1470" y="640.5">312</text><text x="1128" y="641.5">326</text><text x="812" y="641.5">336</text><text x="46" y="667.5">367</text><text x="1468" y="678.5">316</text><text x="779" y="679.5">342</text><text x="900" y="683.5">337</text><text x="964" y="685.5">336</text><text x="1114" y="683.5">330</text><text x="1334" y="687.5">325</text><text x="1221" y="699.5">327</text><text x="769" y="715.5">348</text><text x="1100" y="723.5">336</text><text x="1441" y="727.5">324</text><text x="104" y="737.5">373</text><text x="1005" y="733.5">335</text><text x="1000" y="747.5">337</text><text x="874" y="753.5">3627</text><text x="945" y="758.5">3647</text><text x="995" y="769.5">339</text><text x="566" y="766.5">3658</text><text x="989" y="786.5">341</text><text x="1328" y="778.5">337</text><text x="650" y="788.5">3654</text><text x="731" y="795.5">3644</text><text x="5" y="795.5">41</text><text x="86" y="807.5">379</text><text x="787" y="812.5">3636</text><text x="1096" y="805.5">3599</text><text x="1132" y="802.5">3593</text><text x="1190" y="818.5">3591</text><text x="1573" y="853.5">3535</text><text x="1302" y="859.5">3569</text><text x="902" y="881.5">362</text><text x="1057" y="879.5">3600</text><text x="807" y="899.5">375</text><text x="618" y="887.5">373</text><text x="1111" y="907.5">3594</text><text x="1150" y="915.5">3588</text><text x="1506" y="1035.5">3536</text><text x="1563" y="1049.5">3530</text></g><circle cx="800" cy="528" r="4" fill="#4A4540"/><rect x="0" y="0" width="1600" height="2.5" fill="#F4F2EC"/></svg></div>
<div id="popup">
  <div class="ph">
    <span class="pt">(2 of 2)</span>
    <svg class="picons" width="90" height="21" viewBox="0 0 90 21" style="position:absolute;left:185px;top:0">
      <polygon points="16,10.5 23,5.5 23,15.5" fill="#fff"/>
      <rect x="56.5" y="6" width="10.5" height="9.5" fill="none" stroke="#fff" stroke-width="1.4"/>
      <rect x="56" y="5.5" width="11.5" height="2.4" fill="#fff"/>
      <path d="M75.5 5.5 L85 15.5 M85 5.5 L75.5 15.5" stroke="#fff" stroke-width="1.8"/>
    </svg>
  </div>
  <div class="pz">Zone: Low Density Urban Residential</div>
  <div class="psep"></div>
  <div class="pl" style="top:61.3px">Name:</div><div class="pl" style="top:61.3px;left:84px">UR2</div>
  <div class="pl" style="top:75.3px">Description:</div><div class="pl" style="top:75.3px;left:84px">Low Density Urban Residential</div>
  <div class="pl" style="top:104.3px">A copy of CBRM's Land-use Bylaw can be</div>
  <div class="pl" style="top:118.3px">found <u class="lk">here</u></div>
  <div class="pl" style="top:147.3px">If you have questions, you can email to</div>
  <div class="pl" style="top:161.3px"><u class="lk">planningconsult@cbrm.ns.ca</u></div>
  <div class="pl" style="top:197.6px"><u class="lk">Zoom to</u></div>
  <svg style="position:absolute;left:236px;top:201px" width="20" height="8"><circle cx="3" cy="4" r="2.2" fill="#6A6A6A"/><circle cx="9.5" cy="4" r="2.2" fill="#6A6A6A"/><circle cx="16" cy="4" r="2.2" fill="#6A6A6A"/></svg>
  <svg style="position:absolute;left:-11px;top:98px" width="12" height="22"><polygon points="0,10 12,0 12,20" fill="#fff"/></svg>
</div>
<div id="bar">
  <svg style="position:absolute;left:790px;top:3px" width="20" height="6"><circle cx="3" cy="3" r="1.6" fill="#1B2E6A"/><circle cx="10" cy="3" r="1.6" fill="#1B2E6A"/><circle cx="17" cy="3" r="1.6" fill="#1B2E6A"/></svg>
  <svg style="position:absolute;left:0;top:0" width="700" height="50"><text x="9" y="34" font-family="Liberation Sans, sans-serif" font-size="27" letter-spacing="-0.75" fill="#D6E6FF" stroke="#3F70DE" stroke-width="1.1">CBRM Land-Use Bylaw / Zoning Interactive Map</text></svg>
  <svg style="position:absolute;left:0;top:0" width="700" height="101" viewBox="0 0 700 101">
    <circle cx="21.2" cy="72" r="12.3" fill="#fff"/>
    <path d="M16 72 H26.4 M21.2 66.8 V77.2" stroke="#3F70DE" stroke-width="2"/>
    <circle cx="53.7" cy="72" r="12.3" fill="#fff"/>
    <path d="M48.5 72 H58.9" stroke="#3F70DE" stroke-width="2"/>
    <rect x="74.4" y="55" width="254" height="33.3" rx="3" fill="#2F57B6"/>
    <polygon points="85,68.5 98.8,68.5 91.9,76" fill="#fff"/>
    <path d="M276.5 67 L289 79 M289 67 L276.5 79" stroke="#fff" stroke-width="1.5"/>
    <circle cx="308.5" cy="69.5" r="5" fill="none" stroke="#fff" stroke-width="2"/>
    <path d="M312 73 L318.5 79.5" stroke="#fff" stroke-width="2.6" stroke-linecap="round"/>
    <circle cx="339" cy="64.7" r="2" fill="#14337F"/><circle cx="339" cy="71.5" r="2" fill="#14337F"/><circle cx="339" cy="79" r="2" fill="#14337F"/>
    <!-- list -->
    <polygon points="366.5,60.5 369.5,65.5 363.5,65.5" fill="#fff"/>
    <rect x="364" y="69.3" width="5" height="5" fill="#fff"/>
    <circle cx="366.5" cy="81.6" r="2.7" fill="#fff"/>
    <path d="M371 63 H389 M371 71.8 H389 M371 81.6 H389" stroke="#fff" stroke-width="2.2"/>
    <!-- layers -->
    <polygon points="431,59 443.5,65 431,71 418.5,65" fill="#fff"/>
    <path d="M419 70.5 L431 76.5 L443 70.5" fill="none" stroke="#fff" stroke-width="2.2"/>
    <path d="M419 76.5 L431 82.5 L443 76.5" fill="none" stroke="#fff" stroke-width="2.2"/>
    <!-- grid -->
    <rect x="474" y="59.6" width="11" height="11" fill="#fff"/><rect x="488" y="59.6" width="11" height="11" fill="#fff"/>
    <rect x="474" y="73.5" width="11" height="11" fill="#fff"/><rect x="488" y="73.5" width="11" height="11" fill="#fff"/>
    <!-- ruler -->
    <g transform="translate(541,71.5) rotate(-45)">
      <rect x="-15" y="-4" width="30" height="8" fill="#fff"/>
      <path d="M-12 -4 V-1 M-9 -4 V0.5 M-6 -4 V-1 M-3 -4 V0.5 M0 -4 V-1 M3 -4 V0.5 M6 -4 V-1 M9 -4 V0.5 M12 -4 V-1" stroke="#3F70DE" stroke-width="0.9"/>
    </g>
    <!-- palette -->
    <path d="M597 59.5 C604 59.5 608.5 64.5 608.5 70.5 C608.5 76 605 78 602 77 C599.5 76.2 598.5 77.5 599 79.5 C599.5 82 597.5 84 595 84 C588 84 584 79 584 72 C584 65 589.5 59.5 597 59.5 Z" fill="#fff"/>
    <circle cx="597.5" cy="65" r="1.9" fill="#3F70DE"/><circle cx="603" cy="67.5" r="1.9" fill="#3F70DE"/><circle cx="604" cy="73" r="1.9" fill="#3F70DE"/><circle cx="590" cy="70" r="1.9" fill="#3F70DE"/><circle cx="596" cy="76" r="1.9" fill="#3F70DE"/>
    <path d="M593 58 V86" stroke="#3F70DE" stroke-width="1.6"/>
    <path d="M593 58 V86" stroke="#fff" stroke-width="0.8"/>
    <!-- printer -->
    <rect x="644" y="59" width="14" height="7" fill="none" stroke="#fff" stroke-width="1.8"/>
    <path d="M638.5 68 Q638.5 65.5 641 65.5 H661 Q663.5 65.5 663.5 68 V79 H659 V75 H643 V79 H638.5 Z" fill="#fff"/>
    <rect x="644" y="76.5" width="14" height="7" fill="none" stroke="#fff" stroke-width="1.8"/>
  </svg>
  <div class="stext">324 Convent Street, New</div>
</div>

<div id="topline"></div>
<div id="below"></div>

</body></html>
